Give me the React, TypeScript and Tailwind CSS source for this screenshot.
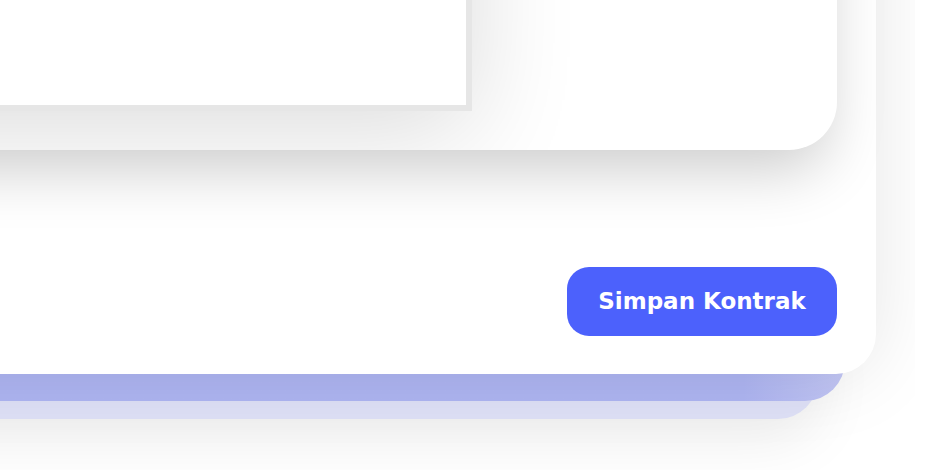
import React from "react";

export default function App() {
  return (
    <div className="flex w-[934px] h-[470px] bg-white">
      <div className="w-[915px] h-[470px] overflow-hidden bg-white flex flex-col justify-end items-end pr-[39px] pb-[51px]">
        <div className="w-[1300px] shrink-0 flex flex-col">
          <div className="relative z-30 bg-white rounded-br-[40px] shadow-[0_0_80px_rgba(0,0,0,0.1)] flex flex-col pr-[39px] pb-[38px]">
            <div className="h-[400px] bg-white rounded-br-[48px] shadow-[0_30px_60px_-10px_rgba(0,0,0,0.2)] overflow-hidden flex justify-end items-end pr-[365px] pb-[39px]">
              <div className="w-[900px] h-[360px] bg-white border-[6px] border-[#e6e6e6] shadow-[0_20px_100px_rgba(0,0,0,0.14)]" />
            </div>
            <div className="mt-[117px] flex justify-end">
              <button className="w-[270px] h-[69px] rounded-[22px] bg-[#4c61fc] text-white text-[23px] font-bold font-['DejaVu_Sans',sans-serif] flex items-center justify-center">
                Simpan Kontrak
              </button>
            </div>
          </div>
          <div className="relative z-20 self-stretch mr-[31px] -mt-[80px] h-[107px] rounded-br-[40px] bg-linear-to-r from-[#aeb5f2] from-92% to-[#c2c6f4]" />
          <div className="relative z-10 self-stretch mr-[58px] -mt-[80px] h-[98px] rounded-br-[40px] bg-[#dee0f6] shadow-[0_20px_60px_rgba(0,0,0,0.08)]" />
        </div>
      </div>
    </div>
  );
}
